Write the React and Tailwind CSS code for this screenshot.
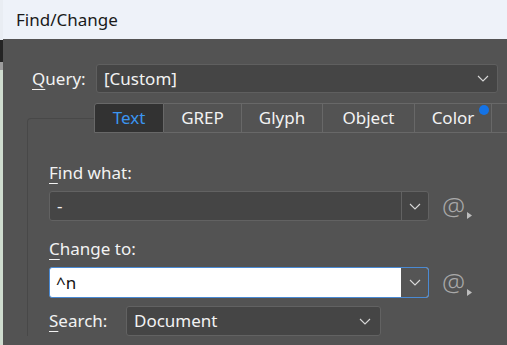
import React from "react";

function Chevron({ className = "" }) {
  return (
    <svg width="12" height="7" viewBox="0 0 12 7" className={className} fill="none">
      <path d="M1 1l5 5 5-5" stroke="#d8d8d8" strokeWidth="1.1" />
    </svg>
  );
}

function AtButton() {
  return (
    <div className="relative flex h-[28px] w-[30px] items-center justify-start text-[26px] font-light leading-none text-[#a9a9a9]">
      <span className="-mt-[1px]">@</span>
      <svg width="5" height="7" viewBox="0 0 5 7" className="absolute bottom-[1px] right-[0px]">
        <path d="M0 0l5 3.5L0 7z" fill="#bdbdbd" />
      </svg>
    </div>
  );
}

function Label({ first, rest, className = "" }) {
  return (
    <span className={`text-[17px] leading-[20px] text-[#f2f2f2] ${className}`}>
      <span className="underline decoration-1 underline-offset-[4px]">{first}</span>
      {rest}
    </span>
  );
}

const tabs = [
  { name: "Text", w: "w-[70px]", active: true },
  { name: "GREP", w: "w-[78px]" },
  { name: "Glyph", w: "w-[81px]" },
  { name: "Object", w: "w-[92px]" },
  { name: "Color", w: "w-[77px]", dot: true },
  { name: "", w: "w-[20px]" },
];

export default function App() {
  return (
    <div
      className="flex h-[345px] w-[507px] overflow-hidden bg-[#535353]"
      style={{ fontFamily: '"Noto Sans", "Open Sans", sans-serif' }}
    >
      <div className="flex w-[3px] shrink-0 flex-col">
        <div className="h-[40px] bg-[#e9edf3]" />
        <div className="h-[22px] bg-[#242424]" />
        <div className="h-[8px] bg-[#9c9c9c]" />
        <div className="flex-1 bg-[#cfdccf]" />
      </div>

      <div className="flex min-w-0 flex-1 flex-col">
        <div className="flex h-[39px] shrink-0 items-center bg-[#eef2f9] pl-[13px] text-[17px] text-[#1a1a1a]">
          Find/Change
        </div>

        <div className="flex items-center pl-[29px] pt-[25px]">
          <Label first="Q" rest="uery:" className="w-[64px] shrink-0" />
          <div className="flex h-[29px] w-[402px] shrink-0 items-center justify-between rounded-[3px] border border-[#5f5f5f] bg-[#454545] pl-[7px] pr-[8px] text-[17px] text-[#f2f2f2]">
            <span>[Custom]</span>
            <Chevron />
          </div>
        </div>

        <div className="ml-[24px] mt-[10px] flex flex-col">
          <div className="relative z-10 ml-[67px] flex h-[30px]">
            {tabs.map((t, i) => (
              <div
                key={i}
                className={`relative flex shrink-0 items-center justify-center border border-l-0 border-[#686868] text-[17px] first:rounded-tl-[3px] first:border-l ${t.w} ${
                  t.active ? "bg-[#323232] text-[#3b95f0]" : "bg-[#535353] text-[#f2f2f2]"
                }`}
              >
                {t.name}
                {t.dot && (
                  <span className="absolute right-[2px] top-[1px] h-[10px] w-[10px] rounded-full bg-[#1473e6]" />
                )}
              </div>
            ))}
          </div>

          <div className="-mt-[15px] flex flex-col rounded-tl-[4px] border-l border-t border-[#484848] pl-[21px] pt-[44px]">
            <Label first="F" rest="ind what:" />
            <div className="mt-[8px] flex items-center">
              <div className="flex h-[30px] w-[380px] shrink-0 items-center rounded-[3px] border border-[#626262] bg-[#454545]">
                <span className="flex-1 pl-[7px] text-[17px] text-[#f2f2f2]">-</span>
                <div className="flex h-full w-[27px] items-center justify-center border-l border-[#626262]">
                  <Chevron />
                </div>
              </div>
              <div className="ml-[13px]">
                <AtButton />
              </div>
            </div>

            <div className="mt-[16px]">
              <Label first="C" rest="hange to:" />
            </div>
            <div className="mt-[6px] flex items-center">
              <div className="flex h-[31px] w-[380px] shrink-0 items-center overflow-hidden rounded-[3px] border border-[#4a8ad4] bg-white">
                <span className="flex-1 pl-[6px] text-[17px] text-[#111]">^n</span>
                <div className="flex h-full w-[27px] items-center justify-center bg-[#555555]">
                  <Chevron />
                </div>
              </div>
              <div className="ml-[13px]">
                <AtButton />
              </div>
            </div>

            <div className="mt-[8px] flex items-center">
              <Label first="S" rest="earch:" className="w-[77px] shrink-0" />
              <div className="flex h-[30px] w-[255px] shrink-0 items-center justify-between rounded-[3px] border border-[#626262] bg-[#454545] pl-[7px] pr-[9px] text-[17px] text-[#f2f2f2]">
                <span>Document</span>
                <Chevron />
              </div>
            </div>
          </div>
        </div>
      </div>
    </div>
  );
}
